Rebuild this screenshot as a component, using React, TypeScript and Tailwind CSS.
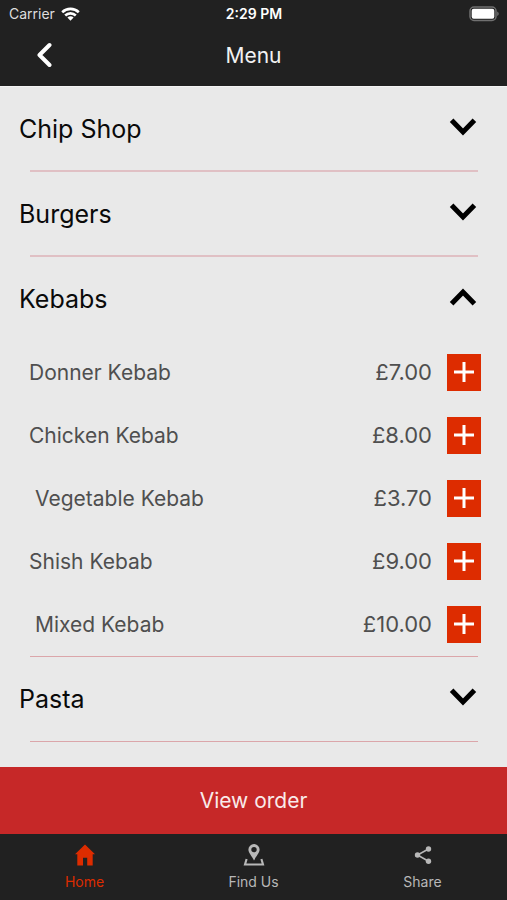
import { useState } from "react";
import { clsx } from "clsx";

type Item = { name: string; price: number; indent?: boolean };
type Category = { title: string; items: Item[]; thin?: boolean };

const categories: Category[] = [
  { title: "Chip Shop", items: [] },
  { title: "Burgers", items: [] },
  {
    title: "Kebabs",
    thin: true,
    items: [
      { name: "Donner Kebab", price: 7 },
      { name: "Chicken Kebab", price: 8 },
      { name: "Vegetable Kebab", price: 3.7, indent: true },
      { name: "Shish Kebab", price: 9 },
      { name: "Mixed Kebab", price: 10, indent: true },
    ],
  },
  { title: "Pasta", items: [], thin: true },
];

export default function App() {
  const [open, setOpen] = useState<string | null>("Kebabs");

  return (
    <div className="flex min-h-screen flex-col bg-[#e9e9e9] font-['Inter','Liberation_Sans',sans-serif]">
      <header className="border-b border-[#f4f4f4] bg-[#212121] text-white">
        <StatusBar />
        <div className="grid h-[58px] grid-cols-[1fr_auto_1fr] items-center px-6 pb-0.5">
          <button type="button" aria-label="Back" className="flex size-10 items-center justify-center pb-0.5">
            <svg viewBox="0 0 16 26" className="h-[26px] w-4" fill="none" stroke="currentColor" strokeWidth="4" strokeLinecap="round" strokeLinejoin="round">
              <path d="M13.5 3 3.5 13l10 10" />
            </svg>
          </button>
          <h1 className="text-[21px] leading-7 text-[#f2f2f2]">Menu</h1>
        </div>
      </header>

      <main className="flex-1">
        {categories.map((category) => (
          <Section
            key={category.title}
            category={category}
            open={open === category.title}
            onToggle={() => setOpen(open === category.title ? null : category.title)}
          />
        ))}
      </main>

      <button type="button" className="h-[67px] w-full bg-[#c62828] text-[21px] text-[#f9eaea]">
        View order
      </button>
      <TabBar />
    </div>
  );
}

const StatusBar = () => (
  <div className="grid h-7 grid-cols-[1fr_auto_1fr] items-center pr-2 pl-[9px] text-sm">
    <div className="flex items-center gap-1.5 text-[#dedede]">
      Carrier
      <svg viewBox="0 0 19 14" className="h-3.5 w-[19px]" fill="none" stroke="#fff" strokeWidth="2.6">
        <path d="M1.2 5.2a12 12 0 0 1 16.6 0" />
        <path d="M4.2 8.5a7.6 7.6 0 0 1 10.6 0" />
        <path d="M9.5 13.8 6.4 10.6a4.5 4.5 0 0 1 6.2 0z" fill="#fff" stroke="none" />
      </svg>
    </div>
    <span className="font-semibold">2:29 PM</span>
    <svg viewBox="0 0 31 16" className="h-4 w-[31px] justify-self-end" fill="none">
      <rect x="2" y="1" width="26" height="13.5" rx="4" stroke="#707070" strokeWidth="1.5" />
      <rect x="3.7" y="2.8" width="22.6" height="9.9" rx="2" fill="#fff" />
      <path d="M29.2 5.5c2 .8 2 3.7 0 4.5z" fill="#707070" />
    </svg>
  </div>
);

const Section = ({ category, open, onToggle }: { category: Category; open: boolean; onToggle: () => void }) => (
  <section>
    <h2>
      <button
        type="button"
        aria-expanded={open}
        onClick={onToggle}
        className={clsx("flex w-full items-center justify-between pt-0.5 pr-[30px] pl-[19px] text-[25px] text-[#0a0a0a]", category.thin ? "h-[84px]" : "h-[83px]")}
      >
        {category.title}
        <svg viewBox="0 0 28 18" className={clsx("mb-1.5 h-[18px] w-7", open && "rotate-180")} fill="none" stroke="#000" strokeWidth="5">
          <path d="M2.6 2.2 14 14l11.4-11.8" />
        </svg>
      </button>
    </h2>
    {open && (
      <ul>
        {category.items.map((item) => (
          <li key={item.name} className={clsx("flex h-[63px] items-center pr-[26px] text-[#4f4f4f]", item.indent ? "pl-[35px]" : "pl-[29px]")}>
            <span className="flex-1 text-[21px]">{item.name}</span>
            <span className="text-[22px]">£{item.price.toFixed(2)}</span>
            <button type="button" aria-label={`Add ${item.name}`} className="ml-[15px] flex h-[37px] w-[34px] items-center justify-center bg-[#dd2c00] pb-0.5">
              <svg viewBox="0 0 20 20" className="size-5" stroke="#fff" strokeWidth="3">
                <path d="M10 0v20M0 10h20" />
              </svg>
            </button>
          </li>
        ))}
      </ul>
    )}
    <div className={clsx("mr-[29px] ml-[30px]", category.thin ? "h-px bg-[#dba6aa]" : "h-0.5 bg-[#e0c0c4]")} />
  </section>
);

const tabs = [
  {
    label: "Home",
    active: true,
    icon: <path d="M11 .5 21 10.3h-2.3V21.5h-5.5v-7.8H9v7.8H3.3V10.3H1L11 .5z" fill="currentColor" />,
  },
  {
    label: "Find Us",
    icon: (
      <>
        <path fillRule="evenodd" d="M11 0a5.6 5.6 0 0 1 5.6 5.6c0 3.4-3.4 6.5-5.6 11-2.2-4.5-5.6-7.6-5.6-11A5.6 5.6 0 0 1 11 0zm0 2.9a2.7 2.7 0 1 0 0 5.4 2.7 2.7 0 0 0 0-5.4z" fill="currentColor" />
        <path d="M3.6 15 2 20.5h18L18.4 15" fill="none" stroke="currentColor" strokeWidth="2.1" />
      </>
    ),
  },
  {
    label: "Share",
    icon: (
      <>
        <path d="M16.5 5 5.5 11l11 6.3" fill="none" stroke="currentColor" strokeWidth="1.6" />
        <circle cx="16.5" cy="5" r="2.7" fill="currentColor" />
        <circle cx="5.5" cy="11" r="2.7" fill="currentColor" />
        <circle cx="16.5" cy="17.3" r="2.7" fill="currentColor" />
      </>
    ),
  },
];

const TabBar = () => (
  <nav className="grid h-[66px] grid-cols-3 bg-[#212121]">
    {tabs.map((tab) => (
      <a
        key={tab.label}
        href="#"
        aria-current={tab.active ? "page" : undefined}
        className={clsx("flex flex-col items-center gap-1.5 pt-2.5 text-sm leading-5", tab.active ? "text-[#dd2c00]" : "text-[#b8b8b8]")}
      >
        <svg viewBox="0 0 22 22" className="size-[22px]">
          {tab.icon}
        </svg>
        {tab.label}
      </a>
    ))}
  </nav>
);
